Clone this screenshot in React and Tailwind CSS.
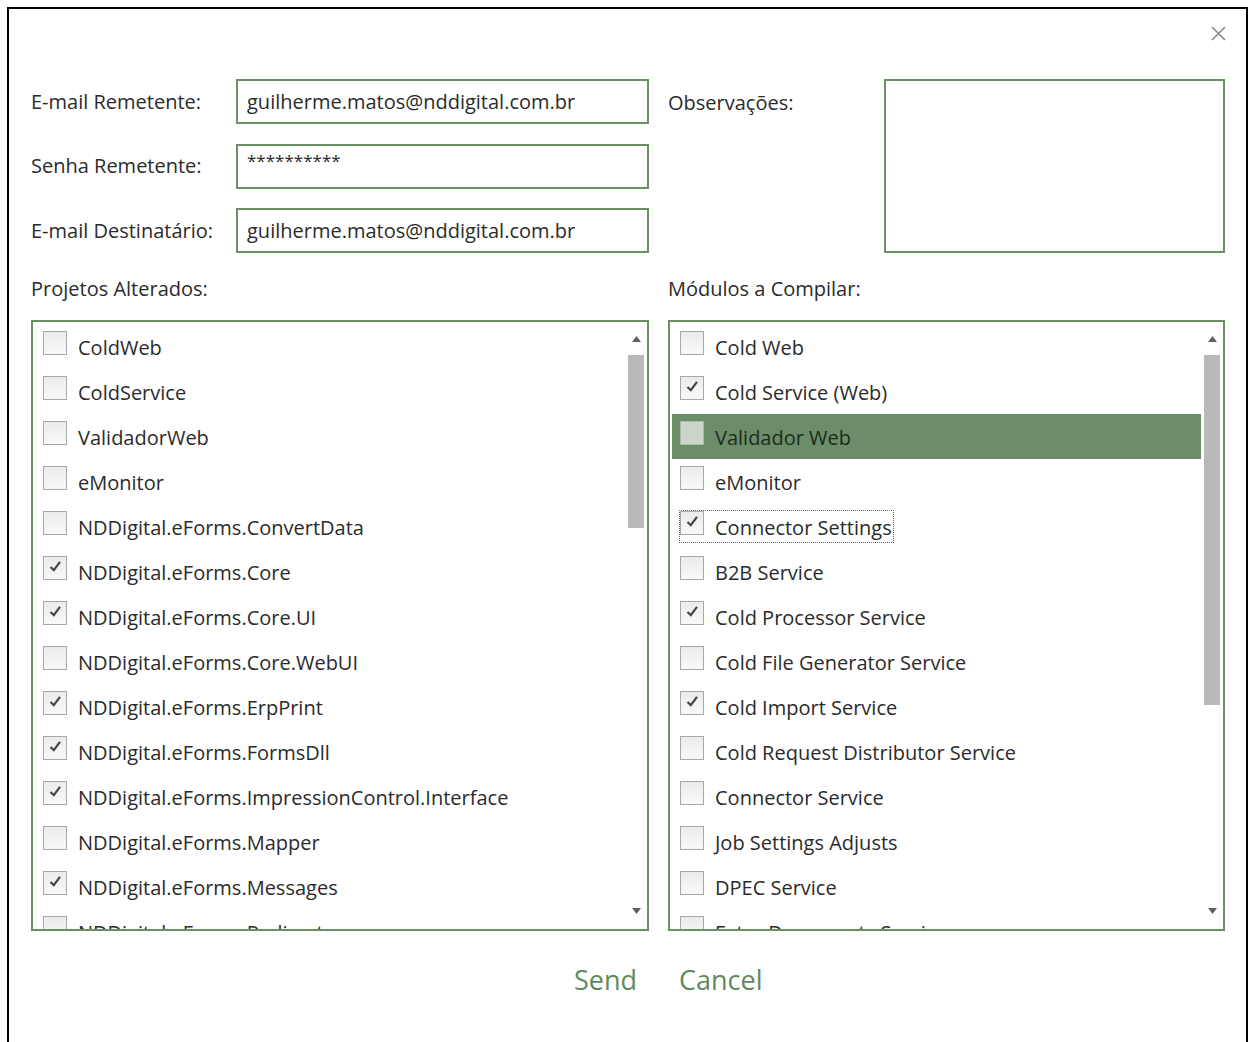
import React, { useState } from 'react';

const font = { fontFamily: '"Open Sans", "Noto Sans", sans-serif' };

const projetos = [
  { name: 'ColdWeb', checked: false },
  { name: 'ColdService', checked: false },
  { name: 'ValidadorWeb', checked: false },
  { name: 'eMonitor', checked: false },
  { name: 'NDDigital.eForms.ConvertData', checked: false },
  { name: 'NDDigital.eForms.Core', checked: true },
  { name: 'NDDigital.eForms.Core.UI', checked: true },
  { name: 'NDDigital.eForms.Core.WebUI', checked: false },
  { name: 'NDDigital.eForms.ErpPrint', checked: true },
  { name: 'NDDigital.eForms.FormsDll', checked: true },
  { name: 'NDDigital.eForms.ImpressionControl.Interface', checked: true },
  { name: 'NDDigital.eForms.Mapper', checked: false },
  { name: 'NDDigital.eForms.Messages', checked: true },
  { name: 'NDDigital.eForms.Redirect', checked: false },
];

const modulos = [
  { name: 'Cold Web', checked: false },
  { name: 'Cold Service (Web)', checked: true },
  { name: 'Validador Web', checked: false },
  { name: 'eMonitor', checked: false },
  { name: 'Connector Settings', checked: true },
  { name: 'B2B Service', checked: false },
  { name: 'Cold Processor Service', checked: true },
  { name: 'Cold File Generator Service', checked: false },
  { name: 'Cold Import Service', checked: true },
  { name: 'Cold Request Distributor Service', checked: false },
  { name: 'Connector Service', checked: false },
  { name: 'Job Settings Adjusts', checked: false },
  { name: 'DPEC Service', checked: false },
  { name: 'Extra Documents Service', checked: false },
];

// Windows-style check box
const CheckBox = ({ checked, selected }) => (
  <span
    className={`w-[24px] h-[24px] flex-shrink-0 border flex items-center justify-center ${
      selected ? 'border-[#a9bba7] bg-[#cbd6c9]' : 'border-[#a8a8a8] bg-gradient-to-b from-[#ebebeb] to-[#f9f9f9]'
    }`}
  >
    {checked && (
      <svg width="15" height="15" viewBox="0 0 15 15" className="-mt-[3px]">
        <path d="M2.5 8 L5.8 11.2 L12 2.8" fill="none" stroke="#454545" strokeWidth="2.2" />
      </svg>
    )}
  </span>
);

const Triangle = ({ down }) => (
  <svg width="9" height="6" viewBox="0 0 9 6">
    <path d={down ? 'M0 0 L9 0 L4.5 6 Z' : 'M0 6 L9 6 L4.5 0 Z'} fill="#5f5f5f" />
  </svg>
);

const CheckList = ({ items, thumb, selectedIndex, focusIndex }) => (
  <div className="h-[611px] border-2 border-[#6b9066] bg-white flex overflow-hidden">
    <ul className="flex-1 min-w-0 overflow-hidden pt-[2px] pl-[2px]">
      {items.map((item, i) => {
        const selected = i === selectedIndex;
        const focused = i === focusIndex;
        return (
          <li
            key={item.name}
            className={`h-[45px] flex items-center pl-[8px] whitespace-nowrap text-[20px] ${
              selected ? 'bg-[#6b8e68] text-[#1e2a1d]' : 'text-[#2b2b2b]'
            }`}
          >
            <span
              className={`flex h-[31px] items-start gap-[11px] pr-[1px] ${
                focused ? 'outline outline-1 outline-dotted outline-[#606060]' : ''
              }`}
            >
              <CheckBox checked={item.checked} selected={selected} />
              <span className="leading-[31px] mt-[1px]">{item.name}</span>
            </span>
          </li>
        );
      })}
    </ul>
    {/* scroll bar */}
    <div className="w-[16px] ml-[3px] mr-[3px] flex flex-col">
      <div className="h-[33px] flex items-center justify-center pt-[1px]">
        <Triangle />
      </div>
      <div className="bg-[#b9b9b9] w-[16px]" style={{ height: thumb }} />
      <div className="flex-1" />
      <div className="h-[33px] flex items-center justify-center pb-[4px]">
        <Triangle down />
      </div>
    </div>
  </div>
);

const Field = ({ label, value, small }) => (
  <div className="flex items-center h-[45px]">
    <label className="w-[205px] text-[20px] text-[#2b2b2b]">{label}</label>
    <div className="w-[413px] h-[45px] border-2 border-[#6b9066] flex items-center pl-[9px] text-[20px] text-[#2b2b2b]">
      {small ? <span className="text-[17px] -mt-[10px]">{value}</span> : value}
    </div>
  </div>
);

export default function App() {
  const [obs] = useState('');
  return (
    <div className="w-[1250px] h-[1042px] bg-white overflow-hidden" style={font}>
      <div className="ml-[7px] mt-[7px] w-[1241px] h-[1035px] border-2 border-b-0 border-black">
        <div className="h-[70px] flex justify-end items-start pt-[17px] pr-[20px]">
          <svg width="15" height="15" viewBox="0 0 15 15">
            <path d="M1 1 L14 14 M14 1 L1 14" stroke="#8a8a8a" strokeWidth="1.6" />
          </svg>
        </div>

        <div className="grid grid-cols-[618px_557px] gap-x-[19px] pl-[22px]">
          <div className="flex flex-col gap-[19.5px]">
            <Field label="E-mail Remetente:" value="guilherme.matos@nddigital.com.br" />
            <Field label="Senha Remetente:" value="**********" small />
            <Field label="E-mail Destinatário:" value="guilherme.matos@nddigital.com.br" />
          </div>
          <div className="flex">
            <label className="w-[216px] pt-[9px] text-[20px] text-[#2b2b2b]">Observações:</label>
            <textarea
              value={obs}
              readOnly
              className="w-[341px] h-[174px] border-2 border-[#6b9066] resize-none outline-none"
            />
          </div>

          <div className="h-[67px] pt-[21px] text-[20px] text-[#2b2b2b]">Projetos Alterados:</div>
          <div className="h-[67px] pt-[21px] text-[20px] text-[#2b2b2b]">Módulos a Compilar:</div>

          <CheckList items={projetos} thumb={173} />
          <CheckList items={modulos} thumb={350} selectedIndex={2} focusIndex={4} />

          <div className="flex justify-end pr-[12px] pt-[29px]">
            <button className="text-[27px] text-[#5e8a5c]">Send</button>
          </div>
          <div className="flex pl-[11px] pt-[29px]">
            <button className="text-[27px] text-[#5e8a5c]">Cancel</button>
          </div>
        </div>
      </div>
    </div>
  );
}
